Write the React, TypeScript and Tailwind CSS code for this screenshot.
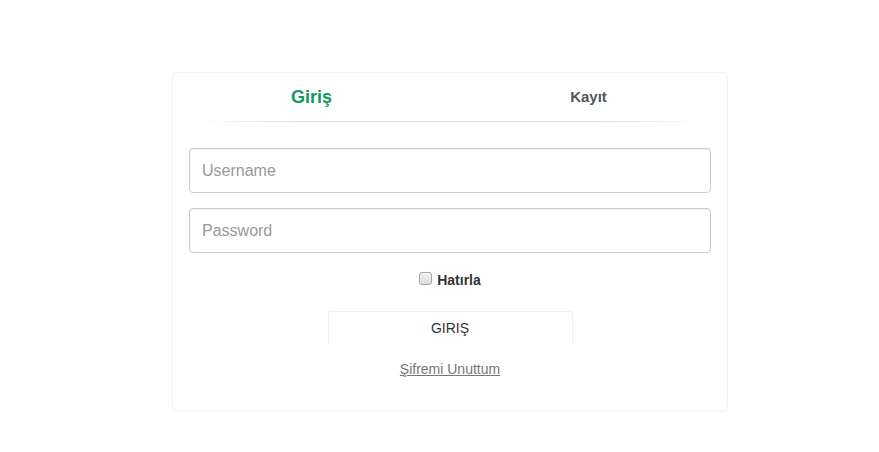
import { useState } from "react";

const App = () => {
  const [tab, setTab] = useState<"giris" | "kayit">("giris");
  const [remember, setRemember] = useState(false);

  return (
    <div
      className="h-[452px] w-full bg-white pt-[72px]"
      style={{ fontFamily: '"Liberation Sans", Arial, sans-serif' }}
    >
      <div className="ml-[172px] w-[556px] rounded-[4px] border border-[#f5f5f5] bg-white pb-[29px] shadow-[0_1px_2px_rgba(0,0,0,0.03)]">
        <div className="flex h-[48px] items-center">
          <button
            className={`flex-1 pt-[1px] text-center font-bold ${
              tab === "giris"
                ? "text-[18px] text-[#13995f]"
                : "text-[15px] text-[#555]"
            }`}
            onClick={() => setTab("giris")}
          >
            Giriş
          </button>
          <button
            className={`flex-1 text-center font-bold ${
              tab === "kayit"
                ? "text-[18px] text-[#13995f]"
                : "text-[15px] text-[#555]"
            }`}
            onClick={() => setTab("kayit")}
          >
            Kayıt
          </button>
        </div>
        <div className="mx-[26px] h-px bg-[linear-gradient(to_right,rgba(220,220,220,0),#dcdcdc_20%,#dcdcdc_80%,rgba(220,220,220,0))]" />

        <div className="flex flex-col px-4 pt-[26px]">
          <input
            type="text"
            placeholder="Username"
            className="h-[45px] w-full rounded-[4px] border border-[#ccc] px-[12px] text-[16px] text-[#555] shadow-[inset_0_1px_1px_rgba(0,0,0,0.075)] outline-none placeholder:text-[#999]"
          />
          <input
            type="password"
            placeholder="Password"
            className="mt-[15px] h-[45px] w-full rounded-[4px] border border-[#ccc] px-[12px] text-[16px] text-[#555] shadow-[inset_0_1px_1px_rgba(0,0,0,0.075)] outline-none placeholder:text-[#999]"
          />

          <label className="mt-[17px] flex items-center justify-center gap-[5px] text-[14px] font-bold text-[#333]">
            <input
              type="checkbox"
              checked={remember}
              onChange={(e) => setRemember(e.target.checked)}
              className="mb-[4px] h-[13px] w-[13px] appearance-none rounded-[3px] border border-[#a8a8a8] bg-[linear-gradient(#f4f4f4,#dcdcdc)] checked:bg-[#13995f]"
            />
            <span>Hatırla</span>
          </label>

          <div className="mt-[20px] flex justify-center">
            <button className="h-[34px] w-[245px] rounded-t-[3px] border border-b-0 border-[#f0f0f0] bg-white text-[14px] text-[#333]">
              GIRIŞ
            </button>
          </div>

          <div className="mt-[12px] text-center">
            <a href="#" className="text-[14px] text-[#777] underline">
              Şifremi Unuttum
            </a>
          </div>
        </div>
      </div>
    </div>
  );
};

export default App;
